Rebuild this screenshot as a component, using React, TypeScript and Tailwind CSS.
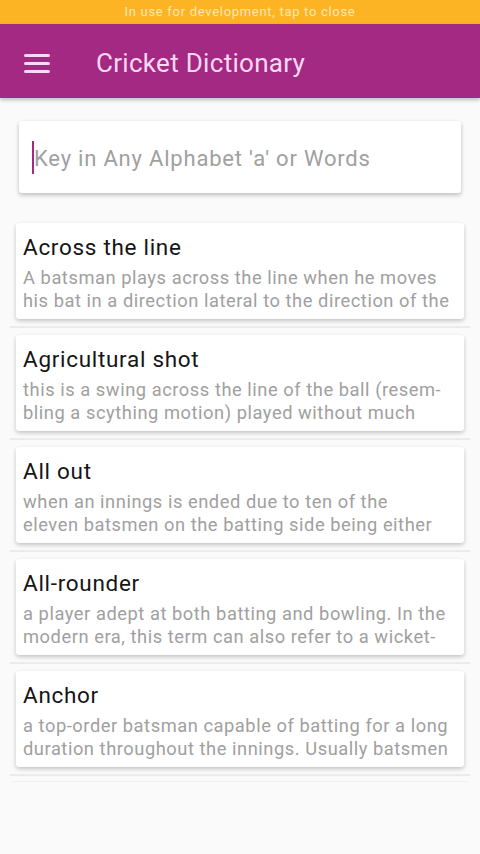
import { useState } from "react";

interface Term {
  word: string;
  meaning: string;
}

const terms: Term[] = [
  {
    word: "Across the line",
    meaning:
      "A batsman plays across the line when he moves his bat in a direction lateral to the direction of the ball, rather than straight down it.",
  },
  {
    word: "Agricultural shot",
    meaning:
      "this is a swing across the line of the ball (resem\u00ADbling a scything motion) played without much technique or skill.",
  },
  {
    word: "All out",
    meaning:
      "when an innings is ended due to ten of the\neleven batsmen on the batting side being either dismissed or unable to bat.",
  },
  {
    word: "All-rounder",
    meaning:
      "a player adept at both batting and bowling. In the modern era, this term can also refer to a wicket-keeper who is also good at batting.",
  },
  {
    word: "Anchor",
    meaning:
      "a top-order batsman capable of batting for a long duration throughout the innings. Usually batsmen in the top order play this role.",
  },
];

const MenuIcon = () => (
  <div className="flex w-[26px] flex-col gap-[5px]">
    <span className="h-[3px] rounded-full bg-[#fbd9f3]" />
    <span className="h-[3px] rounded-full bg-[#fbd9f3]" />
    <span className="h-[3px] rounded-full bg-[#fbd9f3]" />
  </div>
);

const TermCard = ({ term }: { term: Term }) => (
  <div className="px-[10px]">
    <div className="mx-[6px] mt-[7px] rounded-[3px] bg-white px-[7px] pt-[9px] pb-[7px] shadow-[0_2px_4px_rgba(0,0,0,0.22)]">
      <p className="text-[22.5px] leading-[30px] tracking-[0.7px] text-[#151515]">{term.word}</p>
      <p
        className="mt-[4px] h-[46px] overflow-hidden whitespace-pre-line text-[18.3px] leading-[23px] tracking-[0.55px] text-[#a0a0a0]"
        style={{ hyphens: "manual" }}
      >
        {term.meaning}
      </p>
    </div>
    <div className="mt-[7px] h-[2px] bg-[#ebebeb]" />
  </div>
);

export default function App() {
  const [query, setQuery] = useState("");

  return (
    <div
      className="h-[854px] w-[480px] overflow-hidden bg-[#fafafa]"
      style={{ fontFamily: "Roboto, 'Noto Sans', sans-serif" }}
    >
      <div className="flex h-[24px] items-center justify-center bg-[#fcb425] text-[13px] tracking-[0.7px] text-[#fbe6b4]">
        In use for development, tap to close
      </div>

      <header className="relative z-10 flex h-[74px] items-center bg-[#a32983] pl-[24px] pt-[4px] shadow-[0_2px_4px_rgba(0,0,0,0.25)]">
        <MenuIcon />
        <h1 className="ml-[46px] text-[26px] tracking-[0.3px] text-[#fbd9f3]">Cricket Dictionary</h1>
      </header>

      <div className="px-[19px] pt-[23px]">
        <div className="flex h-[72px] items-center rounded-[3px] bg-white pl-[13px] shadow-[0_2px_4px_rgba(0,0,0,0.25)]">
          <input
            value={query}
            onChange={(e) => setQuery(e.target.value)}
            placeholder="Key in Any Alphabet 'a' or Words"
            className="w-full border-l-2 border-[#a32983] bg-transparent pt-[2px] text-[22px] leading-[31px] tracking-[0.8px] text-[#222] outline-none placeholder:text-[#a0a0a0]"
          />
        </div>
      </div>

      <div className="pt-[23px]">
        {terms.map((term) => (
          <TermCard key={term.word} term={term} />
        ))}
        <div className="mx-[12px] mt-[6px] h-[80px] rounded-[3px] bg-[#fafafa] shadow-[0_-1px_1px_rgba(0,0,0,0.05)]" />
      </div>
    </div>
  );
}
